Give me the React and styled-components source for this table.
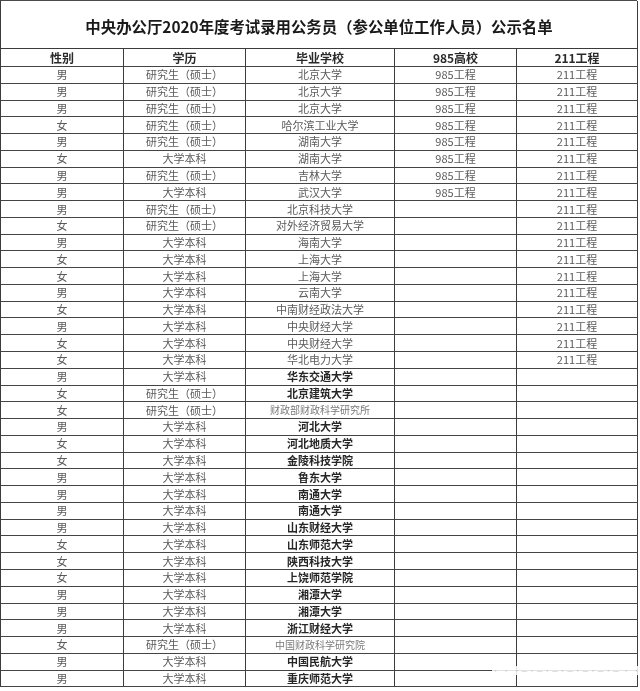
import React from "react";
import styled, { createGlobalStyle } from "styled-components";

const Global = createGlobalStyle`
  html, body { margin: 0; padding: 0; background: #ffffff; }
  body { font-family: "Noto Sans CJK SC", "Noto Sans", sans-serif; }
`;

const Page = styled.div`
  width: 640px;
  height: 691px;
  position: relative;
  overflow: hidden;
  background: #fff;
`;

const Sheet = styled.div`
  display: grid;
  grid-template-columns: 123px 122px 149px 122px 121px;
  grid-template-rows: 48px 18px repeat(37, 16.78px);
  width: 637px;
  box-sizing: border-box;
  border-top: 1px solid #4a4a4a;
  border-left: 1px solid #3c3c3c;
  filter: blur(0.4px);
`;

const Title = styled.div`
  grid-column: 1 / -1;
  display: flex;
  align-items: center;
  justify-content: center;
  border-right: 1px solid #3c3c3c;
  border-bottom: 1px solid #3a3a3a;
  font-size: 15.4px;
  font-weight: 700;
  color: #1a1a1a;
  padding-top: 2px;
`;

const Cell = styled.div`
  display: flex;
  align-items: center;
  justify-content: center;
  box-sizing: border-box;
  border-right: 1px solid #3c3c3c;
  border-bottom: 1px solid #444;
  font-size: ${(p) => (p.$tone === "s" ? "10px" : p.$head ? "12px" : "11px")};
  font-weight: ${(p) => (p.$head || p.$tone === "b" ? 700 : 400)};
  color: ${(p) =>
    p.$head ? "#2a2a2a" : p.$tone === "b" ? "#262626" : p.$tone === "s" ? "#7a7a7a" : "#5a5a5a"};
  white-space: nowrap;
  line-height: 1;
  overflow: hidden;
`;

const Watermark = styled.div`
  position: absolute;
  left: 492px;
  top: 666px;
  width: 148px;
  height: 9px;
  background: rgba(255, 255, 255, 0.85);
  color: #c4c4c4;
  font-size: 7px;
  line-height: 9px;
  letter-spacing: 1px;
  white-space: nowrap;
  font-family: "Noto Sans CJK SC", sans-serif;
`;

const M = "男";
const F = "女";
const G = "研究生（硕士）";
const U = "大学本科";

const rows = [
  [M, G, "北京大学", 1, 1, "n"],
  [M, G, "北京大学", 1, 1, "n"],
  [M, G, "北京大学", 1, 1, "n"],
  [F, G, "哈尔滨工业大学", 1, 1, "n"],
  [M, G, "湖南大学", 1, 1, "n"],
  [F, U, "湖南大学", 1, 1, "n"],
  [M, G, "吉林大学", 1, 1, "n"],
  [M, U, "武汉大学", 1, 1, "n"],
  [M, G, "北京科技大学", 0, 1, "n"],
  [F, G, "对外经济贸易大学", 0, 1, "n"],
  [M, U, "海南大学", 0, 1, "n"],
  [F, U, "上海大学", 0, 1, "n"],
  [F, U, "上海大学", 0, 1, "n"],
  [M, U, "云南大学", 0, 1, "n"],
  [F, U, "中南财经政法大学", 0, 1, "n"],
  [M, U, "中央财经大学", 0, 1, "n"],
  [F, U, "中央财经大学", 0, 1, "n"],
  [F, U, "华北电力大学", 0, 1, "n"],
  [M, U, "华东交通大学", 0, 0, "b"],
  [F, G, "北京建筑大学", 0, 0, "b"],
  [F, G, "财政部财政科学研究所", 0, 0, "s"],
  [M, U, "河北大学", 0, 0, "b"],
  [F, U, "河北地质大学", 0, 0, "b"],
  [F, U, "金陵科技学院", 0, 0, "b"],
  [M, U, "鲁东大学", 0, 0, "b"],
  [M, U, "南通大学", 0, 0, "b"],
  [M, U, "南通大学", 0, 0, "b"],
  [M, U, "山东财经大学", 0, 0, "b"],
  [F, U, "山东师范大学", 0, 0, "b"],
  [F, U, "陕西科技大学", 0, 0, "b"],
  [F, U, "上饶师范学院", 0, 0, "b"],
  [M, U, "湘潭大学", 0, 0, "b"],
  [M, U, "湘潭大学", 0, 0, "b"],
  [M, U, "浙江财经大学", 0, 0, "b"],
  [F, G, "中国财政科学研究院", 0, 0, "s"],
  [M, U, "中国民航大学", 0, 0, "b"],
  [M, U, "重庆师范大学", 0, 0, "b"],
];

const headers = ["性别", "学历", "毕业学校", "985高校", "211工程"];

export default function App() {
  return (
    <Page>
      <Global />
      <Sheet>
        <Title>中央办公厅2020年度考试录用公务员（参公单位工作人员）公示名单</Title>
        {headers.map((h) => (
          <Cell key={h} $head>
            {h}
          </Cell>
        ))}
        {rows.map(([sex, edu, school, a, b, tone], i) => (
          <React.Fragment key={i}>
            <Cell>{sex}</Cell>
            <Cell>{edu}</Cell>
            <Cell $tone={tone}>{school}</Cell>
            <Cell>{a ? "985工程" : ""}</Cell>
            <Cell>{b ? "211工程" : ""}</Cell>
          </React.Fragment>
        ))}
      </Sheet>
      <Watermark>· · ·—·—·—·—·—·—·— · ·</Watermark>
    </Page>
  );
}
